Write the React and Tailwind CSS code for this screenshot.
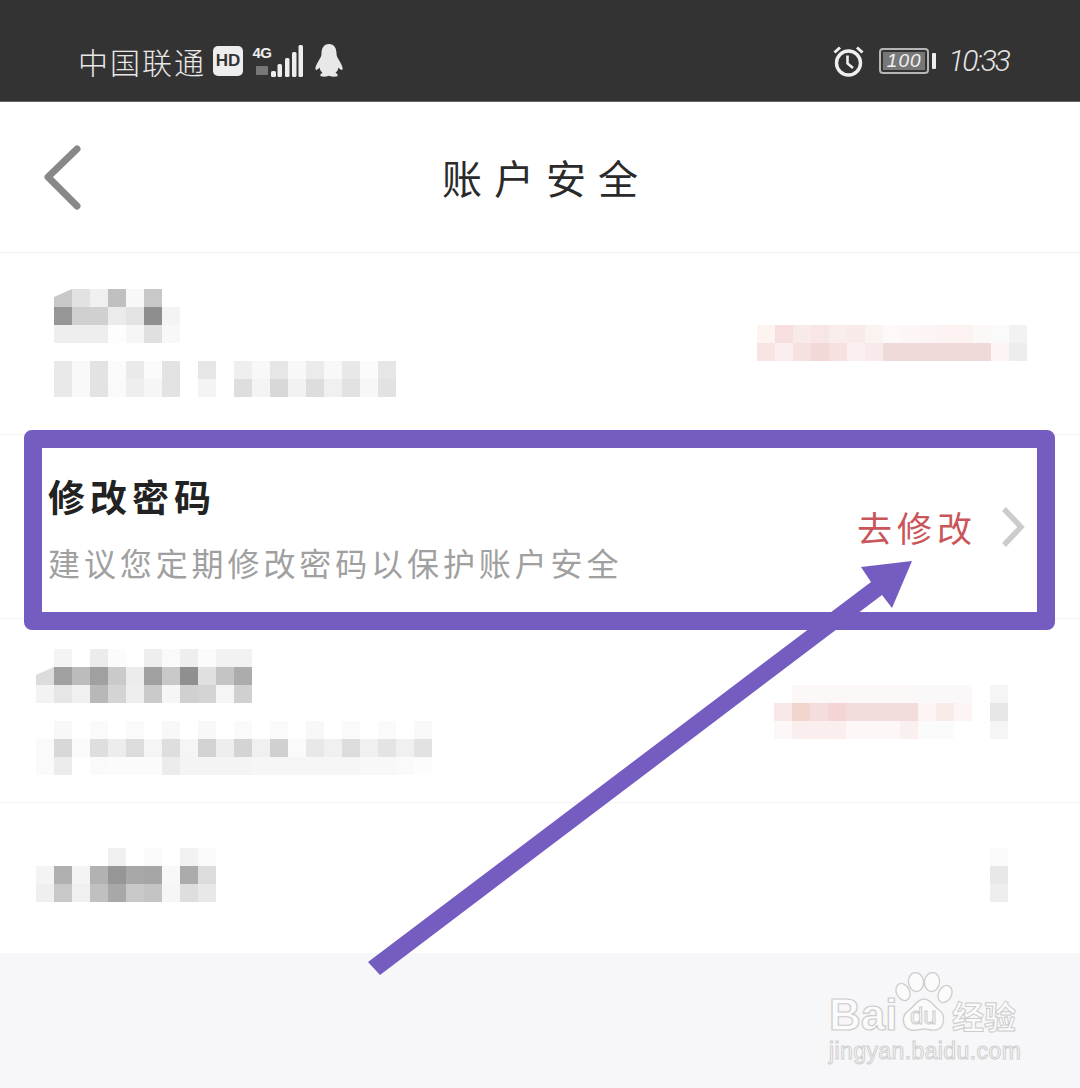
import React from "react";

const CJK = "font-['Noto_Sans_CJK_SC',sans-serif]";

// one block of the blurred-out text: rows of hex values, "-" is empty, "*" cuts the corner
const Mosaic = ({ rows }) => (
  <div className="flex flex-col blur-[0.5px]">
    {rows.map((row, i) => (
      <div key={i} className="flex">
        {row.split(" ").map((c, j) => {
          const cut = c.endsWith("*");
          const hex = c.replace("*", "");
          const color = hex === "-" ? "transparent" : hex.length === 2 ? `#${hex}${hex}${hex}` : `#${hex}`;
          return (
            <div
              key={j}
              className={`w-[18px] h-[18px] ${cut ? "[clip-path:polygon(100%_0,100%_100%,0_100%,0_45%)]" : ""}`}
              style={{ backgroundColor: color }}
            />
          );
        })}
      </div>
    ))}
  </div>
);

const Signal = () => (
  <svg width="32" height="32" viewBox="0 0 32 32" fill="#eeeeee">
    <rect x="0" y="26" width="5" height="6" rx="1.5" />
    <rect x="6.5" y="19" width="4.5" height="13" rx="1.5" />
    <rect x="14" y="13" width="4.5" height="19" rx="1.5" />
    <rect x="21" y="7" width="4.5" height="25" rx="1.5" />
    <rect x="27.5" y="0" width="4.5" height="32" rx="1.5" />
  </svg>
);

const Penguin = () => (
  <svg width="28" height="33" viewBox="0 0 28 33" fill="#e8e8e8">
    <path d="M14 0C8.5 0 6.5 4.5 6.5 9.5C6.5 12 5.5 13.5 3.5 17C1.5 20.5 0 23 0.5 25.5C1 26.5 3 25.5 4.5 23.5C5 26 6 27.5 7.5 29C5.5 29.7 5 31 5.5 32C6.5 33 11 32.8 14 31.8C17 32.8 21.5 33 22.5 32C23 31 22.5 29.7 20.5 29C22 27.5 23 26 23.5 23.5C25 25.5 27 26.5 27.5 25.5C28 23 26.5 20.5 24.5 17C22.5 13.5 21.5 12 21.5 9.5C21.5 4.5 19.5 0 14 0Z" />
  </svg>
);

const Alarm = () => (
  <svg width="31" height="32" viewBox="0 0 31 32" fill="none" stroke="#efefef">
    <circle cx="15.5" cy="18" r="12" strokeWidth="3.4" />
    <path d="M14.5 10.5V18.5L20 23" strokeWidth="2.6" />
    <path d="M1.5 7.5L7 2.5M29.5 7.5L24 2.5" strokeWidth="3" />
  </svg>
);

const Paw = () => (
  <svg className="absolute inset-0" width="58" height="62" viewBox="0 0 58 62" fill="#fbfbfc" stroke="#cfcfcf" strokeWidth="1.4">
    <ellipse cx="8" cy="20" rx="6.5" ry="9" transform="rotate(-25 8 20)" />
    <ellipse cx="21" cy="10" rx="7.5" ry="9.5" transform="rotate(-8 21 10)" />
    <ellipse cx="37" cy="10" rx="7.5" ry="9.5" transform="rotate(8 37 10)" />
    <ellipse cx="50" cy="22" rx="6.5" ry="9" transform="rotate(25 50 22)" />
    <path d="M29 27C36 27 38 34 44 38C51 43 50 57 40 58C35 58.5 33 57 29 57C25 57 22 59 16 58C7 56 6 44 13 39C20 34 22 27 29 27Z" />
  </svg>
);

const Watermark = () => (
  <div className="absolute left-[829px] top-[972px] w-[200px] flex flex-col">
    <div className="flex items-end h-[62px]">
      <span className="w-[66px] shrink-0 font-['Liberation_Sans',sans-serif] font-bold text-[44px] leading-[38px] h-[38px] text-[#fbfbfc] [-webkit-text-stroke:1.2px_#cccccc]">
        Bai
      </span>
      <div className="relative w-[57px] h-[62px] shrink-0">
        <Paw />
        <span className="absolute left-[15px] top-[31px] font-['Liberation_Sans',sans-serif] text-[24px] leading-[26px] text-[#fbfbfc] [-webkit-text-stroke:1px_#cccccc]">
          du
        </span>
      </div>
      <span className={`${CJK} font-bold text-[32px] leading-[38px] h-[38px] whitespace-nowrap text-[#fbfbfc] [-webkit-text-stroke:1px_#cccccc]`}>
        经验
      </span>
    </div>
    <span className="mt-[4px] font-['Liberation_Sans',sans-serif] text-[23px] leading-[26px] tracking-[0.4px] whitespace-nowrap text-[#fbfbfc] [-webkit-text-stroke:1px_#cfcfcf]">
      jingyan.baidu.com
    </span>
  </div>
);

const App = () => {
  return (
    <div className="relative w-[1080px] h-[1088px] overflow-hidden bg-white flex flex-col">
      {/* Status bar */}
      <div className="h-[102px] shrink-0 bg-[#333333] border-b border-[#666666] flex items-center justify-between pl-[78px] pr-[71px] pt-[20px] text-[#eeeeee]">
        <div className="flex items-center">
          <span className={`${CJK} text-[30px] leading-[36px] tracking-[2px] text-[#e8e8e8] font-light`}>中国联通</span>
          <span className="ml-[7px] w-[30px] h-[30px] rounded-[5px] bg-[#eeeeee] text-[#333333] flex items-center justify-center font-['Liberation_Sans',sans-serif] font-bold text-[17px]">
            HD
          </span>
          <div className="ml-[10px] w-[18px] h-[32px] flex flex-col items-center">
            <span className="font-['Liberation_Sans',sans-serif] font-bold text-[15px] leading-[16px] tracking-[-0.5px]">4G</span>
            <span className="mt-[5px] w-[12px] h-[9px] bg-[#777777] rounded-[1px]" />
          </div>
          <div className="ml-[0px]">
            <Signal />
          </div>
          <div className="ml-[12px]">
            <Penguin />
          </div>
        </div>
        <div className="flex items-center">
          <Alarm />
          <div className="ml-[15px] w-[50px] h-[26px] rounded-[4px] border-2 border-[#b5b5b5] p-[2px]">
            <div className="w-full h-full bg-[#777777] flex items-center justify-center font-['Liberation_Sans',sans-serif] italic text-[19px] leading-none tracking-[1px] text-[#f0f0f0]">
              100
            </div>
          </div>
          <div className="ml-[3px] w-[4px] h-[16px] rounded-[1px] bg-[#eeeeee]" />
          <span className="ml-[12px] font-['Roboto',sans-serif] font-light italic text-[30px] leading-[36px] tracking-[-2px] text-[#e6e6e6]">
            10:33
          </span>
        </div>
      </div>

      {/* Title */}
      <div className="relative h-[151px] shrink-0 border-b border-[#efefef] flex items-center justify-center">
        <svg className="absolute left-[40px] top-[40px]" width="44" height="68" viewBox="0 0 44 68" fill="none">
          <path d="M37 7L8 35L37 64" stroke="#888888" strokeWidth="7" strokeLinecap="round" strokeLinejoin="round" />
        </svg>
        <h1 className={`${CJK} text-[40px] leading-[50px] tracking-[12px] font-normal text-[#2a2a2a] pl-[12px]`}>账户安全</h1>
      </div>

      {/* Blurred row */}
      <div className="h-[182px] shrink-0 border-b border-[#f5f5f5] flex justify-between">
        <div className="pl-[54px] pt-[36px] flex flex-col gap-[18px]">
          <Mosaic rows={["c8* e2 f0 c0 f8 c8", "96 d0 d0 eb e4 8e f4", "ee ee ee fd f6 e0 f8"]} />
          <Mosaic
            rows={[
              "e9 f9 e3 fb ea fb e3 ff e6 ff ef f8 e6 f8 eb f8 e8 fb e6",
              "e9 f9 e3 fa ee f6 e3 ff f4 ff de f4 d8 f2 dd f0 e2 f7 e2",
            ]}
          />
        </div>
        <div className="pt-[72px] pr-[53px]">
          <Mosaic
            rows={[
              "fdf3f1 f6dfde f9eaea f7e6e5 f9eeec f9eaea fbf2f2 fdf9f9 fdf6f6 fdf5f5 fcf2f2 fcf2f2 fdf8f8 fafafa f2",
              "f7e4e3 fbeeee f6e0e0 f3d8d8 f6e0e0 fbf0f0 f8eaea f0d9d9 f0d9d9 f0d9d9 f0d9d9 f0d9d9 f0d9d9 fdf5f5 ed",
            ]}
          />
        </div>
      </div>

      {/* Change password row */}
      <div className="h-[183px] shrink-0 flex items-center justify-between pl-[48px] pr-[54px]">
        <div className="flex flex-col pt-[2px]">
          <span className={`${CJK} font-bold text-[37px] leading-[44px] tracking-[5px] text-[#222222]`}>修改密码</span>
          <span className={`${CJK} mt-[24px] text-[32px] leading-[40px] tracking-[3.9px] text-[#a0a0a0]`}>建议您定期修改密码以保护账户安全</span>
        </div>
        <div className="flex items-center">
          <span className={`${CJK} text-[35px] leading-[44px] tracking-[5px] text-[#c9565a]`}>去修改</span>
          <svg className="ml-[23px]" width="26" height="42" viewBox="0 0 26 42" fill="none">
            <path d="M4 3L21 21L4 39" stroke="#cccccc" strokeWidth="5.5" />
          </svg>
        </div>
      </div>

      {/* Blurred row */}
      <div className="h-[185px] shrink-0 border-y border-[#f5f5f5] flex justify-between">
        <div className="pl-[36px] pt-[30px] flex flex-col gap-[18px]">
          <Mosaic rows={["- f4 ff ec fb ff ee fa ee fb f2 f2", "dc* a0 bc a0 ca ec a0 c8 8f e0 c4 ac", "f3 e6 f0 b8 d4 ee ca f6 d0 d4 f5 d0"]} />
          <Mosaic
            rows={[
              "- f8 ff fa ff fa ff f8 ff f8 ff fa ff fa ff f8 ff fa ff fa ff f9",
              "fa d8 fa de ed dc f5 de f5 d2 ee d4 f0 d0 fa e8 f0 dc f0 e4 f0 e2",
              "fa ec ff fa fb fb fb ec f4 f4 f4 f4 f6 f6 f6 f6 f6 f6 f8 f8 fa fc",
            ]}
          />
        </div>
        <div className="pt-[66px] pr-[72px]">
          <Mosaic
            rows={[
              "fff fdf8f8 fdf8f8 fdf8f8 fdf8f8 fdf8f8 fdf8f8 fdf8f8 faf8f8 faf8f8 faf8f8 ff f5",
              "f8e8e8 f2d5cc f5dddd f3d5d5 f3dcdc f3dcdc f3dcdc f3dcdc fdf5f5 f8ece8 fdf5f5 ff e6",
              "fdf8f8 fbeeee fbeeee fbeeee fdf7f7 fdf7f7 fdf7f7 fbf0f0 fbfbfb fbfbfb ff ff f5",
            ]}
          />
        </div>
      </div>

      {/* Blurred row */}
      <div className="h-[150px] shrink-0 flex justify-between">
        <div className="pl-[36px] pt-[45px]">
          <Mosaic rows={["- - - - f0 - fa - f2 fa", "f4 b0 f4 b2 96 a8 a6 f8 ab dc", "ef c8 f0 c0 a8 c8 c4 f6 de e8"]} />
        </div>
        <div className="pt-[45px] pr-[72px]">
          <Mosaic rows={["fa", "e8", "ee"]} />
        </div>
      </div>

      <div className="flex-1 bg-[#f7f7f9]" />

      {/* Annotation box and arrow */}
      <div className="absolute left-[24px] top-[430px] w-[1031px] h-[200px] rounded-[8px] border-[18px] border-[#755cc0]" />
      <svg className="absolute inset-0" width="1080" height="1088" viewBox="0 0 1080 1088">
        <path d="M368 962L871 582L861 567L912 561L892 608L882 595L380 975Z" fill="#755cc0" />
      </svg>

      <Watermark />
    </div>
  );
};

export default App;
